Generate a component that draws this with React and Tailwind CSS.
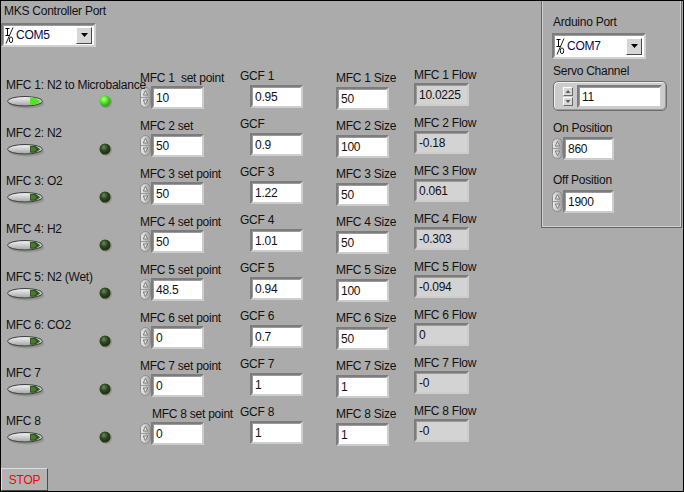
import React from 'react'

const rows = [
  { sw: 'MFC 1: N2 to Microbalance', on: true, spLabel: 'MFC 1  set point', sp: '10', gcfLabel: 'GCF 1', gcf: '0.95', size: '50', flow: '10.0225' },
  { sw: 'MFC 2: N2', spLabel: 'MFC 2 set', sp: '50', gcfLabel: 'GCF', gcf: '0.9', size: '100', flow: '-0.18' },
  { sw: 'MFC 3: O2', spLabel: 'MFC 3 set point', sp: '50', gcfLabel: 'GCF 3', gcf: '1.22', size: '50', flow: '0.061' },
  { sw: 'MFC 4: H2', spLabel: 'MFC 4 set point', sp: '50', gcfLabel: 'GCF 4', gcf: '1.01', size: '50', flow: '-0.303' },
  { sw: 'MFC 5: N2 (Wet)', spLabel: 'MFC 5 set point', sp: '48.5', gcfLabel: 'GCF 5', gcf: '0.94', size: '100', flow: '-0.094' },
  { sw: 'MFC 6: CO2', spLabel: 'MFC 6 set point', sp: '0', gcfLabel: 'GCF 6', gcf: '0.7', size: '50', flow: '0' },
  { sw: 'MFC 7', spLabel: 'MFC 7 set point', sp: '0', gcfLabel: 'GCF 7', gcf: '1', size: '1', flow: '-0' },
  { sw: 'MFC 8', spLabel: 'MFC 8 set point', sp: '0', gcfLabel: 'GCF 8', gcf: '1', size: '1', flow: '-0', shift: true },
]

function Spinner() {
  return (
    <svg width="11" height="21" viewBox="0 0 11 21" className="shrink-0">
      <defs>
        <linearGradient id="spg" x1="0" y1="0" x2="1" y2="0">
          <stop offset="0" stopColor="#f0f0f0" />
          <stop offset="1" stopColor="#9c9c9c" />
        </linearGradient>
      </defs>
      <rect x="0.5" y="0.5" width="10" height="20" rx="5" fill="url(#spg)" stroke="#8a8a8a" />
      <line x1="1" y1="10.5" x2="10" y2="10.5" stroke="#9a9a9a" />
      <path d="M5.5 3.5 L7.8 8 H3.2 Z" fill="#dcdcdc" stroke="#707070" strokeWidth="0.8" />
      <path d="M5.5 17.5 L7.8 13 H3.2 Z" fill="#dcdcdc" stroke="#707070" strokeWidth="0.8" />
    </svg>
  )
}

function NumBox({ value, w = 'w-[53px]', indicator }) {
  return (
    <div className={`h-[23px] ${w} border-2 border-t-[#7c7c7c] border-l-[#7c7c7c] border-b-[#cdcdcd] border-r-[#cdcdcd]`}>
      <div className={`h-full pl-[2px] leading-[18px] border border-t-[#9a9a9a] border-l-[#9a9a9a] border-b-transparent border-r-transparent ${indicator ? 'bg-[#d3d3d3]' : 'bg-white'}`}>
        {value}
      </div>
    </div>
  )
}

function Toggle({ on }) {
  return (
    <svg width="38" height="13" viewBox="0 0 38 13">
      <defs>
        <linearGradient id="tgg" x1="0" y1="0" x2="0" y2="1">
          <stop offset="0" stopColor="#f6f6f6" />
          <stop offset="1" stopColor="#a2a2a2" />
        </linearGradient>
      </defs>
      <ellipse cx="19.5" cy="7.5" rx="17.5" ry="5" fill="#7d7d7d" opacity="0.55" />
      <ellipse cx="18" cy="5.25" rx="17.5" ry="4.75" fill="url(#tgg)" stroke="#3c3c3c" />
      <path d="M23 1.8 H28.5 L33.2 5.25 L28.5 8.7 H23 Z" fill={on ? '#4ee622' : '#2e5a1c'} />
      {!on && <path d="M24 3 H27 L29.5 5.25 L27 7.5 H24 Z" fill="#5f8a4a" opacity="0.6" />}
    </svg>
  )
}

function Led({ on }) {
  return (
    <svg width="14" height="14" viewBox="0 0 14 14">
      <defs>
        <radialGradient id="ledOn" cx="0.4" cy="0.35" r="0.7">
          <stop offset="0" stopColor="#c8ff9e" />
          <stop offset="0.45" stopColor="#4ce824" />
          <stop offset="1" stopColor="#26960a" />
        </radialGradient>
        <radialGradient id="ledOff" cx="0.4" cy="0.35" r="0.7">
          <stop offset="0" stopColor="#6e8c5a" />
          <stop offset="0.45" stopColor="#2c4a1c" />
          <stop offset="1" stopColor="#15260c" />
        </radialGradient>
      </defs>
      <circle cx="7" cy="7" r="6" fill="#7a7a7a" opacity="0.5" />
      <circle cx="6" cy="6" r="5.5" fill={on ? 'url(#ledOn)' : 'url(#ledOff)'} />
    </svg>
  )
}

function IoIcon() {
  return (
    <svg width="9" height="17" viewBox="0 0 9 17" className="shrink-0">
      <path d="M0.5 1.5h4M2.5 1.5v7M0.5 8.5h4" stroke="#000" strokeWidth="1" fill="none" />
      <path d="M8 0.5 L1 16.5" stroke="#000" strokeWidth="0.9" />
      <ellipse cx="6" cy="12.8" rx="1.7" ry="2.9" fill="none" stroke="#000" strokeWidth="0.9" />
    </svg>
  )
}

function Combo({ value, w, h }) {
  return (
    <div className={`flex ${w} ${h} border-2 border-t-[#7c7c7c] border-l-[#7c7c7c] border-b-[#d0d0d0] border-r-[#d0d0d0]`}>
      <div className="flex flex-1 items-center bg-white pl-[1px] border border-t-[#9a9a9a] border-l-[#9a9a9a] border-b-transparent border-r-transparent">
        <IoIcon />
        <span className="ml-[2px] text-[#0a0a4a]">{value}</span>
        <div className="ml-auto mr-[1px] flex h-[17px] w-[16px] items-center justify-center border border-t-white border-l-white border-b-[#4a4a4a] border-r-[#4a4a4a] bg-[#d6d6d6]">
          <svg width="7" height="4" viewBox="0 0 7 4"><path d="M0 0h7l-3.5 4z" fill="#000" /></svg>
        </div>
      </div>
    </div>
  )
}

function MfcRow({ r, n }) {
  return (
    <div className="flex h-[48px]">
      <div className="ml-[5px] w-[93px] pt-[13px]">
        <p className="relative z-10 whitespace-nowrap leading-[14px]">{r.sw}</p>
        <div className="ml-[1px] mt-[4px]"><Toggle on={r.on} /></div>
      </div>
      <div className="mt-[30px] h-[14px] w-[12px]"><Led on={r.on} /></div>
      <div className="ml-[29px] w-[100px] pt-[6px]">
        <p className={`whitespace-pre leading-[14px] ${r.shift ? 'pl-[12px]' : ''}`}>{r.spLabel}</p>
        <div className="mt-[1px] flex items-center">
          <Spinner />
          <NumBox value={r.sp} />
        </div>
      </div>
      <div className="w-[96px] pt-[4px]">
        <p className="leading-[14px]">{r.gcfLabel}</p>
        <div className="ml-[10px] mt-[2px]"><NumBox value={r.gcf} /></div>
      </div>
      <div className="w-[78px] pt-[6px]">
        <p className="whitespace-nowrap leading-[14px]">MFC {n} Size</p>
        <div className="mt-[2px]"><NumBox value={r.size} /></div>
      </div>
      <div className="w-[70px] pt-[3px]">
        <p className="whitespace-nowrap leading-[14px]">MFC {n} Flow</p>
        <div className="mt-[1px]"><NumBox value={r.flow} w="w-[55px]" indicator /></div>
      </div>
    </div>
  )
}

function PosControl({ value }) {
  return (
    <div className="-ml-[1px] flex items-center">
      <div className="flex h-[23px] items-center"><Spinner /></div>
      <NumBox value={value} w="w-[51px]" />
    </div>
  )
}

function ArduinoPanel() {
  return (
    <aside className="h-[227px] w-[141px] border-x border-b border-[#676767] pl-[11px] pt-[14px] shadow-[inset_1px_-1px_0_#cfcfcf,inset_-1px_0_0_#cfcfcf]">
      <p className="leading-[14px]">Arduino Port</p>
      <div className="-ml-[1px] mt-[4px]"><Combo value="COM7" w="w-[94px]" h="h-[26px]" /></div>
      <p className="mt-[5px] leading-[14px]">Servo Channel</p>
      <div className="mt-[3px] flex h-[30px] w-[114px] items-center rounded-[5px] border border-[#6e6e6e] bg-[#cbcbcb] pl-[9px] pr-[4px] shadow-[inset_1px_1px_0_#efefef,inset_-1px_-1px_0_#9a9a9a]">
        <div className="flex flex-col gap-[1px]">
          {['M2 6.5 L5 2.5 L8 6.5 Z', 'M2 2.5 L5 6.5 L8 2.5 Z'].map(d => (
            <div key={d} className="flex h-[9px] w-[10px] items-center justify-center border border-t-white border-l-white border-b-[#6a6a6a] border-r-[#6a6a6a] bg-[#d8d8d8]">
              <svg width="10" height="9" viewBox="0 0 10 9"><path d={d} fill="#5a5a5a" /></svg>
            </div>
          ))}
        </div>
        <div className="ml-[4px] flex-1"><NumBox value="11" w="w-full" /></div>
      </div>
      <p className="mt-[10px] leading-[14px]">On Position</p>
      <div className="mt-[2px]"><PosControl value="860" /></div>
      <p className="mt-[13px] leading-[14px]">Off Position</p>
      <div className="mt-[3px]"><PosControl value="1900" /></div>
    </aside>
  )
}

export default function App() {
  return (
    <div className="flex h-[492px] w-[684px] overflow-hidden border border-black bg-[#ababab] font-['Liberation_Sans',Arial,sans-serif] text-[12px] tracking-[-0.25px] text-[#111]">
      <main className="flex w-[540px] flex-col">
        <div className="h-[64px]">
          <p className="ml-[3px] mt-[3px] leading-[14px]">MKS Controller Port</p>
          <div className="mt-[5px]"><Combo value="COM5" w="w-[95px]" h="h-[24px]" /></div>
        </div>
        {rows.map((r, i) => <MfcRow key={r.sw} r={r} n={i + 1} />)}
        <button className="mt-auto h-[23px] w-[47px] border border-t-[#dcdcdc] border-l-[#dcdcdc] border-b-[#4a4a4a] border-r-[#4a4a4a] bg-[#b3b3b3] text-[12px] leading-[20px] text-[#ff0000]">
          STOP
        </button>
      </main>
      <ArduinoPanel />
    </div>
  )
}
